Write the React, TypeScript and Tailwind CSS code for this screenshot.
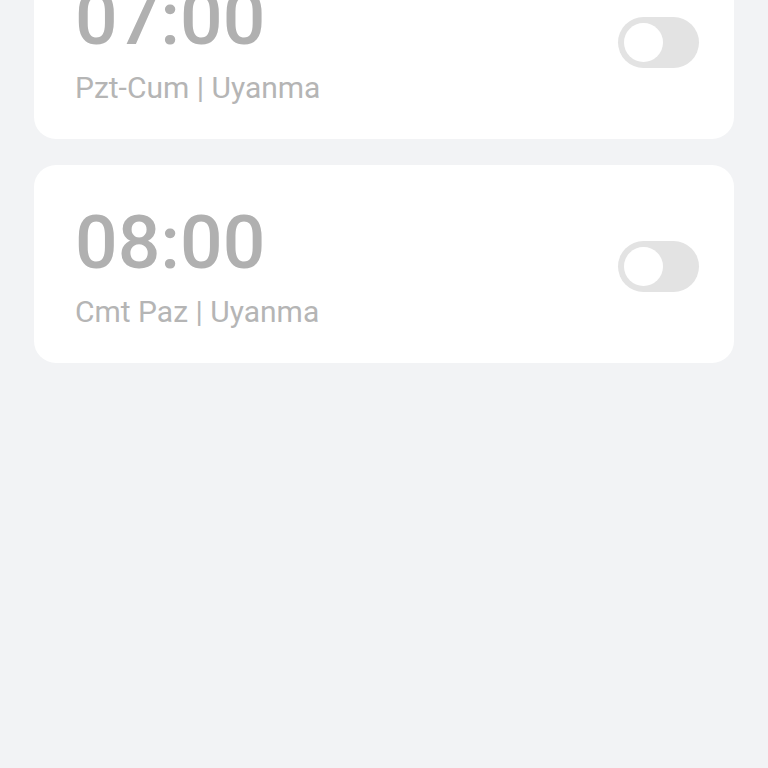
import React, { useState } from 'react';

interface Alarm {
  id: number;
  time: string;
  label: string;
}

const ALARMS: Alarm[] = [
  { id: 1, time: '07:00', label: 'Pzt-Cum | Uyanma' },
  { id: 2, time: '08:00', label: 'Cmt Paz | Uyanma' },
];

function Toggle({ on, onChange }: { on: boolean; onChange: () => void }) {
  return (
    <button
      onClick={onChange}
      className={`flex items-center w-[81px] h-[51px] rounded-full px-[6px] shrink-0 ${
        on ? 'bg-[#3b82f6] justify-end' : 'bg-[#e3e3e3] justify-start'
      }`}
    >
      <span className="block w-[39px] h-[39px] rounded-full bg-white" />
    </button>
  );
}

export default function App() {
  const [enabled, setEnabled] = useState<Record<number, boolean>>({});

  return (
    <div
      className="min-h-[768px] bg-[#f2f3f5] overflow-hidden"
      style={{ fontFamily: 'Roboto, "Noto Sans", sans-serif' }}
    >
      <div className="flex flex-col gap-[26px] px-[34px] -mt-[59px]">
        {ALARMS.map((a) => (
          <div
            key={a.id}
            className="flex items-center justify-between bg-white rounded-[22px] pl-[41px] pr-[35px] pt-[40px] pb-[36px]"
          >
            <div className="flex flex-col">
              <span className="text-[75px] leading-none font-medium text-[#b0b0b0]">{a.time}</span>
              <span className="mt-[17px] text-[30px] leading-none text-[#b5b5b5]">{a.label}</span>
            </div>
            <Toggle
              on={!!enabled[a.id]}
              onChange={() => setEnabled((s) => ({ ...s, [a.id]: !s[a.id] }))}
            />
          </div>
        ))}
      </div>
    </div>
  );
}
